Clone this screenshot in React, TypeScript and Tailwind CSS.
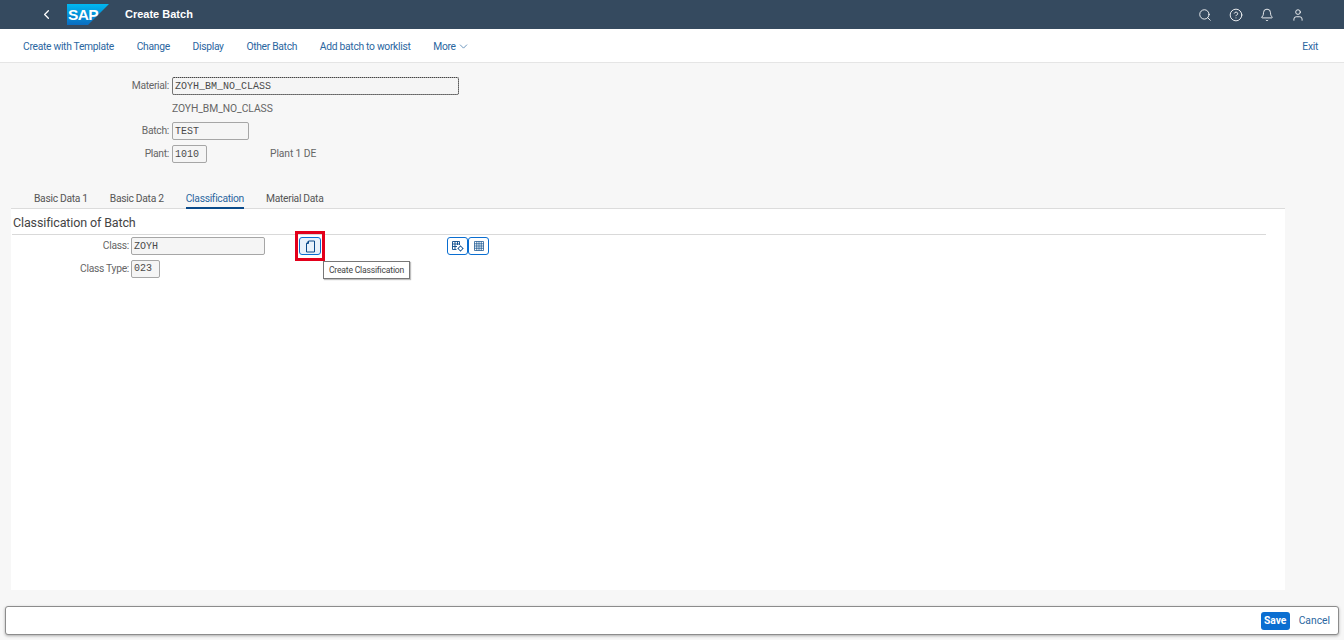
import { Bell, ChevronDown, ChevronLeft, CircleHelp, Search, User } from 'lucide-react';

const actions = ['Create with Template', 'Change', 'Display', 'Other Batch', 'Add batch to worklist'];

function SapLogo() {
  return (
    <svg width="42" height="21" viewBox="0 0 42 21">
      <defs>
        <linearGradient id="sapBlue" x1="0" y1="0" x2="0" y2="1">
          <stop offset="0" stopColor="#00b8f1" />
          <stop offset="1" stopColor="#0a6cc0" />
        </linearGradient>
      </defs>
      <polygon points="0,0 42,0 21,21 0,21" fill="url(#sapBlue)" />
      <text x="1" y="15.5" fontFamily="Liberation Sans" fontWeight="700" fontSize="15.5" letterSpacing="-0.6" fill="#fff">
        SAP
      </text>
    </svg>
  );
}

function TextBox({ value, width, dotted }: { value: string; width: string; dotted?: boolean }) {
  return (
    <div
      className={`${width} h-[18px] bg-[#f5f5f5] rounded-[2px] border border-[#a6a6a6] pl-[2px] flex items-center font-['Liberation_Mono',monospace] text-[10px] tracking-normal text-[#4a4a4a] ${
        dotted ? 'outline-1 outline-dotted outline-[#444] -outline-offset-1' : ''
      }`}
    >
      {value}
    </div>
  );
}

function IconButton({ children }: { children: React.ReactNode }) {
  return (
    <div className="w-[21px] h-[18px] rounded-[3px] border border-[#0a6ed1] bg-white flex items-center justify-center">
      {children}
    </div>
  );
}

export default function App() {
  return (
    <div className="w-[1344px] h-[640px] overflow-hidden bg-[#f7f7f7] flex flex-col font-['Roboto',sans-serif] text-[10.3px] tracking-[-0.3px]">
      {/* Shell header */}
      <div className="h-[29px] shrink-0 bg-[#354a5f] flex items-center text-white">
        <ChevronLeft className="w-[15px] h-[15px] ml-[39px]" strokeWidth={2} />
        <div className="ml-[13px] flex items-center">
          <SapLogo />
        </div>
        <div className="ml-[16px] text-[11px] tracking-normal font-bold font-['Liberation_Sans',sans-serif]">Create Batch</div>
        <div className="ml-auto flex items-center gap-[17px] mr-[39px]">
          <Search className="w-[14px] h-[14px]" strokeWidth={1.5} />
          <CircleHelp className="w-[14px] h-[14px]" strokeWidth={1.5} />
          <Bell className="w-[14px] h-[14px]" strokeWidth={1.5} />
          <User className="w-[14px] h-[14px]" strokeWidth={1.5} />
        </div>
      </div>

      {/* Toolbar */}
      <div className="h-[34px] shrink-0 bg-white border-b border-[#e5e5e5] flex items-center pl-[23px] pr-[26px] pt-[2px] gap-[22.7px] text-[#2a669f]">
        {actions.map((a) => (
          <span key={a}>{a}</span>
        ))}
        <span className="flex items-center gap-[1px]">
          More <ChevronDown className="w-[13px] h-[13px]" strokeWidth={1.25} />
        </span>
        <span className="ml-auto">Exit</span>
      </div>

      {/* Header form */}
      <div className="h-[126px] shrink-0 pt-[14px] text-[#666]">
        <div className="flex items-center h-[18px] gap-[3px]">
          <span className="w-[169px] text-right">Material:</span>
          <TextBox value="ZOYH_BM_NO_CLASS" width="w-[287px]" dotted />
        </div>
        <div className="pl-[172px] mt-[5px] h-[18px] flex items-center tracking-[-0.05px]">ZOYH_BM_NO_CLASS</div>
        <div className="flex items-center h-[18px] gap-[3px] mt-[4px]">
          <span className="w-[169px] text-right">Batch:</span>
          <TextBox value="TEST" width="w-[77px]" />
        </div>
        <div className="flex items-center h-[18px] gap-[3px] mt-[5px]">
          <span className="w-[169px] text-right">Plant:</span>
          <TextBox value="1010" width="w-[35px]" />
          <span className="ml-[60px] tracking-[-0.1px]">Plant 1 DE</span>
        </div>
      </div>

      {/* Tabs */}
      <div className="h-[20px] shrink-0 ml-[11px] w-[1274px] border-b border-[#dcdcdc] flex pl-[23px] gap-[22px] text-[#555]">
        <span className="pt-[2px]">Basic Data 1</span>
        <span className="pt-[2px]">Basic Data 2</span>
        <span className="pt-[2px] text-[#2a669f] border-b-2 border-[#0a4a8a] h-[20px]">Classification</span>
        <span className="pt-[2px]">Material Data</span>
      </div>

      {/* Classification panel */}
      <div className="h-[381px] shrink-0 ml-[11px] w-[1274px] bg-white">
        <div className="ml-[1px] w-[1254px] h-[26px] border-b border-[#d9d9d9] pt-[6px] pl-[1px] text-[12.5px] tracking-[-0.13px] leading-[16px] text-[#444]">
          Classification of Batch
        </div>
        <div className="relative text-[#666]">
          <div className="flex items-center h-[18px] mt-[2px] gap-[2px]">
            <span className="w-[118px] text-right">Class:</span>
            <TextBox value="ZOYH" width="w-[134px]" />
            <div className="ml-[32px] relative">
              <div className="w-[22px] h-[18px] rounded-[3px] border border-[#0a6ed1] bg-[#e8f2fb] flex items-center justify-center">
                <svg width="11" height="13" viewBox="0 0 11 13" fill="none" stroke="#0a4a8a" strokeWidth="1">
                  <path d="M3.5 1H9.5V12H1.5V3.5Z" />
                  <path d="M3.5 1V3.5H1.5" />
                </svg>
              </div>
              <div className="absolute -left-[4px] -top-[6px] w-[30px] h-[30px] border-[3px] border-[#e3001b]" />
              <div className="absolute left-[24px] top-[24px] w-[87px] h-[18px] bg-white border border-[#777] shadow-[1px_1px_1px_rgba(0,0,0,0.25)] flex items-center justify-center whitespace-nowrap text-[8.6px] tracking-[-0.2px] text-[#444]">
                Create Classification
              </div>
            </div>
            <div className="ml-[124px] flex">
              <IconButton>
                <svg width="14" height="13" viewBox="0 0 14 13" fill="none" stroke="#0a4a8a" strokeWidth="0.9">
                  <path d="M1.5 1.5H8.5V5M1.5 1.5V9.5H5.5M1.5 4H8.5M1.5 6.5H6M4 1.5V9.5M6.5 1.5V5" />
                  <circle cx="9.5" cy="8.5" r="2" />
                  <path d="M9.5 5.5V6.5M9.5 10.5V11.5M6.5 8.5H7.5M11.5 8.5H12.5" />
                </svg>
              </IconButton>
              <IconButton>
                <svg width="12" height="12" viewBox="0 0 12 12" fill="none" stroke="#0a4a8a" strokeWidth="0.7">
                  <path d="M1.5 1.5H10.5V10.5H1.5ZM1.5 3.75H10.5M1.5 6H10.5M1.5 8.25H10.5M3.75 1.5V10.5M6 1.5V10.5M8.25 1.5V10.5" />
                </svg>
              </IconButton>
            </div>
          </div>
          <div className="flex items-center h-[19px] mt-[4px] gap-[2px]">
            <span className="w-[118px] text-right">Class Type:</span>
            <TextBox value="023" width="w-[29px]" />
          </div>
        </div>
      </div>

      {/* Footer */}
      <div className="mt-[16px] ml-[5px] w-[1334px] h-[29px] shrink-0 bg-white border border-[#8c8c8c] rounded-[3px] shadow-[0_1px_3px_rgba(0,0,0,0.3)] flex items-center justify-end pr-[8px] tracking-normal">
        <div className="h-[18px] w-[29px] rounded-[3px] bg-[#0a6ed1] text-white font-bold flex items-center justify-center">
          Save
        </div>
        <span className="ml-[9px] text-[#2a669f]">Cancel</span>
      </div>
    </div>
  );
}
